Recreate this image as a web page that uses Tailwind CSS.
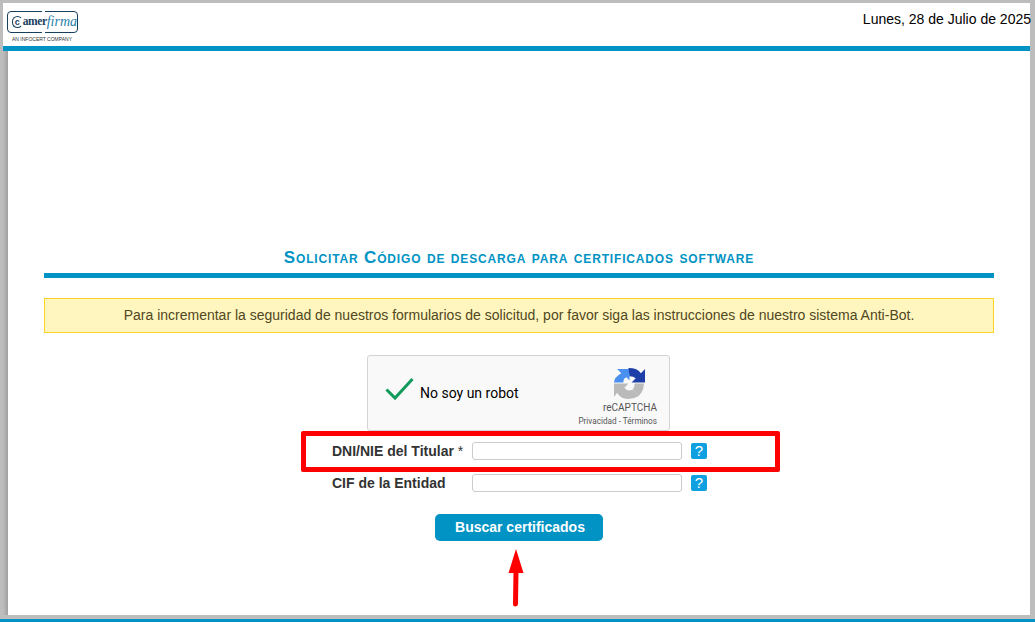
<!DOCTYPE html>
<html lang="es">
<head>
    <meta charset="UTF-8">
    <title>Solicitar Código de descarga</title>
    <script src="https://cdn.jsdelivr.net/npm/@tailwindcss/browser@4"></script>
</head>
<body class="relative h-[622px] w-[1035px] overflow-hidden bg-[#bdbdbd] font-['Liberation_Sans',sans-serif]">
    <div class="flex h-[619px] flex-col pt-[3px] pr-[5px] pb-[4px] pl-[3px]">
        <!-- Header -->
        <header class="flex h-[43px] shrink-0 justify-between bg-white">
            <div class="ml-[4px] mt-[8px] w-[71px]">
                <div class="relative flex h-[22px] items-center rounded-[4px] border border-[#17405f] pl-[4px] font-['Liberation_Serif',serif] text-[11.5px] leading-none text-[#17405f]">
                    <span class="flex h-[12px] w-[11px] items-center justify-center rounded-full border-[1.5px] border-[#17405f] border-r-transparent font-['Liberation_Sans',sans-serif] text-[9px] font-bold">c</span><span class="font-bold tracking-[-0.4px]">amer</span><span class="text-[14px] italic text-[#1f7fa8]">firma</span>
                    <span class="absolute -top-px -bottom-px left-[34px] w-[3px] bg-[linear-gradient(#fff_2px,transparent_2px,transparent_20px,#fff_20px)]"></span>
                </div>
                <div class="mt-[3px] whitespace-nowrap pl-[5px] text-[5px] leading-[7px] text-[#333]">AN INFOCERT COMPANY</div>
            </div>
            <div class="mr-[-1px] mt-[8px] whitespace-nowrap text-[14px] leading-[16px] text-black">Lunes, 28 de Julio de 2025</div>
        </header>
        <div class="h-[5px] shrink-0 bg-[#0093c4]"></div>
        <!-- Content -->
        <div class="flex flex-1">
            <div class="w-[5px] bg-linear-to-r from-[#bdbdbd] to-[#a0a0a0]"></div>
            <div class="flex-1 bg-white pl-[36px] pr-[36px]">
                <h1 class="mt-[198px] text-center text-[17px] leading-[18px] font-bold tracking-[0.84px] text-[#0093c4] [font-variant:small-caps]">Solicitar Código de descarga para certificados software</h1>
                <div class="mt-[6px] h-[5px] bg-[#0093c4]"></div>
                <div class="mt-[20px] flex h-[35px] items-center justify-center border border-[#ffd324] bg-[#fff6bf] text-[14px] text-[#514721]">Para incrementar la seguridad de nuestros formularios de solicitud, por favor siga las instrucciones de nuestro sistema Anti-Bot.</div>
                <!-- reCAPTCHA -->
                <div class="ml-[323px] mt-[22px] flex h-[76px] w-[303px] rounded-[3px] border border-[#d3d3d3] bg-[#f9f9f9] font-['Roboto',sans-serif]">
                    <svg class="ml-[17px] mt-[21px] h-[24px] w-[29px]" viewBox="0 0 29 24"><path d="M1.5 12.5 L10 21 L27.5 2" fill="none" stroke="#129a5c" stroke-width="3"/></svg>
                    <div class="ml-[6px] mt-[29px] text-[14px] leading-[17px] text-black">No soy un robot</div>
                    <div class="ml-auto mr-[12px] flex w-[82px] flex-col items-end">
                        <svg class="mr-[12px] mt-[11px] h-[32px] w-[32px]" viewBox="0 0 31 31">
                            <path d="M15 2 L4 2 L8 6 Q1 10 1 15 L10 15 Q10 11 13 10 L16 13 L16 2 Z" fill="#4a90f0"/>
                            <path d="M15 1 Q24 1 27 6 L31 2 L31 15 L18 15 L22 11 Q20 9 16 9 Z" fill="#1f3fa8"/>
                            <path d="M1 16 L15 16 L11 20 Q14 24 19 22 L25 28 Q20 31 15 31 Q7 31 4 25 L1 29 Z" fill="#bababa"/>
                            <path d="M21 16 L30 16 Q30 23 25 28 L19 22 Q21 20 21 16 Z" fill="#bababa"/>
                        </svg>
                        <div class="mt-[2px] text-[10px] leading-[14px] text-[#555]">reCAPTCHA</div>
                        <div class="mt-[1px] whitespace-nowrap text-[8.2px] leading-[11px] text-[#555]">Privacidad - Términos</div>
                    </div>
                </div>
                <!-- Form -->
                <div class="ml-[288px] mt-[11px] flex h-[18px] items-center">
                    <label class="w-[140px] pt-px text-[14px] font-bold text-[#333]">DNI/NIE del Titular <span class="font-normal">*</span></label>
                    <input type="text" class="h-[18px] w-[210px] rounded-[3px] border border-[#ccc] bg-white">
                    <span class="ml-[9px] flex h-[16px] w-[16px] items-center justify-center rounded-[2px] bg-[#0ea0e0] text-[15px] text-white">?</span>
                </div>
                <div class="ml-[288px] mt-[14px] flex h-[18px] items-center">
                    <label class="w-[140px] pt-px text-[14px] font-bold text-[#333]">CIF de la Entidad</label>
                    <input type="text" class="h-[18px] w-[210px] rounded-[3px] border border-[#ccc] bg-white">
                    <span class="ml-[9px] flex h-[16px] w-[16px] items-center justify-center rounded-[2px] bg-[#0ea0e0] text-[15px] text-white">?</span>
                </div>
                <button class="ml-[391px] mt-[22px] block h-[27px] w-[168px] rounded-[5px] bg-[#0093c4] pl-[2px] text-[14px] font-bold text-white">Buscar certificados</button>
            </div>
        </div>
    </div>
    <div class="h-[3px] bg-[#0093c4]"></div>
    <!-- Annotations over the page -->
    <div class="absolute left-[301px] top-[431px] h-[41px] w-[479px] rounded-[2px] border-[5px] border-[#ff0000]"></div>
    <svg class="absolute left-[505px] top-[547px] h-[62px] w-[22px]" viewBox="0 0 22 62">
        <path d="M11 2 L18.5 26 L3.5 26 Z" fill="#ff0000"/>
        <path d="M11 24 L10.5 57" stroke="#ff0000" stroke-width="5" stroke-linecap="round" fill="none"/>
    </svg>
</body>
</html>
